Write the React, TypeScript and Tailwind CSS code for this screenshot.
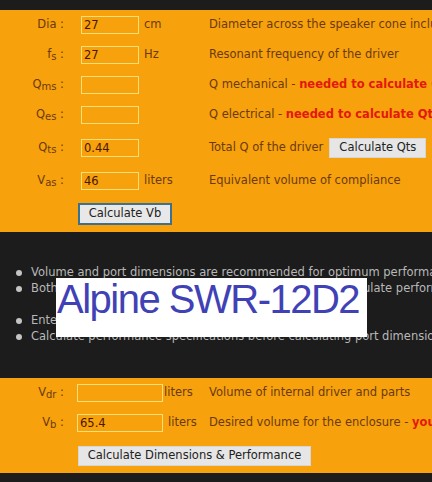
import React from 'react'

const brown = 'text-[#6b3a0e]'

const Field: React.FC<{ value?: string; w: string }> = ({ value = '', w }) => (
  <input
    type="text"
    defaultValue={value}
    className={`${w} h-[18px] shrink-0 border border-[#f7e07a] bg-transparent px-[2px] text-[11.5px] text-[#4a1600] outline-none`}
  />
)

const Label: React.FC<{ main: string; sub?: string; w: string }> = ({ main, sub, w }) => (
  <div className={`${w} shrink-0 text-right ${brown}`}>
    {main}
    {sub && <sub className="bottom-[-0.15em] text-[10px]">{sub}</sub>} :
  </div>
)

const Red: React.FC<{ children: React.ReactNode }> = ({ children }) => (
  <span className="font-bold text-[#e4180a]">{children}</span>
)

const Note: React.FC<{ children: React.ReactNode }> = ({ children }) => (
  <li className="flex h-[16px] items-center">
    <span className="ml-[16px] mr-[9px] h-[6px] w-[6px] shrink-0 rounded-full bg-[#c4c4c4]" />
    <span className="shrink-0">{children}</span>
  </li>
)

export default function App() {
  const topRows = [
    { main: 'Dia', value: '27', unit: 'cm', desc: <>Diameter across the speaker cone including surround</> },
    { main: 'f', sub: 's', value: '27', unit: 'Hz', desc: <>Resonant frequency of the driver</> },
    { main: 'Q', sub: 'ms', value: '', unit: '', desc: <>Q mechanical - <Red>needed to calculate Qts</Red></> },
    { main: 'Q', sub: 'es', value: '', unit: '', desc: <>Q electrical - <Red>needed to calculate Qts</Red></> },
  ]

  return (
    <div className="w-[432px] h-[482px] overflow-hidden whitespace-nowrap bg-[#1c1c1c] font-['DejaVu_Sans',sans-serif] text-[11.5px]">
      <div className="h-[10px]" />

      {/* driver parameters */}
      <div className="bg-[#f7a10c]">
        {topRows.map((r, i) => (
          <div key={i} className="flex h-[30px] items-center">
            <Label main={r.main} sub={r.sub} w="w-[64px]" />
            <div className="ml-[17px]">
              <Field value={r.value} w="w-[58px]" />
            </div>
            <div className={`ml-[5px] w-[65px] shrink-0 ${brown}`}>{r.unit}</div>
            <div className={brown}>{r.desc}</div>
          </div>
        ))}

        <div className="flex h-[36px] items-center">
          <Label main="Q" sub="ts" w="w-[64px]" />
          <div className="ml-[17px]">
            <Field value="0.44" w="w-[58px]" />
          </div>
          <div className="ml-[5px] w-[65px] shrink-0" />
          <div className={brown}>Total Q of the driver</div>
          <button className="ml-[6px] h-[20px] w-[97px] shrink-0 border border-[#d6d6d6] bg-[#e6e6e6] text-[11.5px] text-[#222]">
            Calculate Qts
          </button>
        </div>

        <div className="flex h-[30px] items-center">
          <Label main="V" sub="as" w="w-[64px]" />
          <div className="ml-[17px]">
            <Field value="46" w="w-[58px]" />
          </div>
          <div className={`ml-[5px] w-[65px] shrink-0 ${brown}`}>liters</div>
          <div className={brown}>Equivalent volume of compliance</div>
        </div>

        <div className="flex h-[36px] items-center pl-[78px]">
          <button className="h-[22px] w-[94px] border-2 border-[#3a7190] bg-[#e8e8e8] text-[11.5px] text-[#222]">
            Calculate Vb
          </button>
        </div>
      </div>

      {/* notes */}
      <div className="relative h-[146px] pt-[33px] text-[#b8b8b8]">
        <ul className="flex flex-col">
          <Note>Volume and port dimensions are recommended for optimum performance</Note>
          <Note>Both volume and port dimensions can be changed to calculate performance</Note>
        </ul>
        <ul className="mt-[16px] flex flex-col">
          <Note>Enter the desired volume or use the recommended value</Note>
          <Note>Calculate performance specifications before calculating port dimensions</Note>
        </ul>

        <div className="absolute left-[56px] top-[46px] h-[59px] w-[311px] bg-white pl-[1px] pt-[1px]">
          <div className="font-['Liberation_Sans',Arial,sans-serif] text-[40px] leading-none tracking-[-1.5px] text-[#4141b6]">
            Alpine SWR-12D2
          </div>
        </div>
      </div>

      {/* enclosure */}
      <div className="bg-[#f7a10c]">
        <div className="flex h-[30px] items-center">
          <Label main="V" sub="dr" w="w-[64px]" />
          <div className="ml-[13px]">
            <Field w="w-[86px]" />
          </div>
          <div className={`ml-px w-[45px] shrink-0 ${brown}`}>liters</div>
          <div className={brown}>Volume of internal driver and parts</div>
        </div>
        <div className="flex h-[30px] items-center">
          <Label main="V" sub="b" w="w-[64px]" />
          <div className="ml-[13px]">
            <Field value="65.4" w="w-[86px]" />
          </div>
          <div className={`ml-[5px] w-[41px] shrink-0 ${brown}`}>liters</div>
          <div className={brown}>
            Desired volume for the enclosure - <Red>you can change this</Red>
          </div>
        </div>
        <div className="flex h-[35px] items-center pl-[78px]">
          <button className="h-[20px] w-[233px] border border-[#d6d6d6] bg-[#e6e6e6] text-[11.5px] text-[#222]">
            Calculate Dimensions &amp; Performance
          </button>
        </div>
      </div>
    </div>
  )
}
